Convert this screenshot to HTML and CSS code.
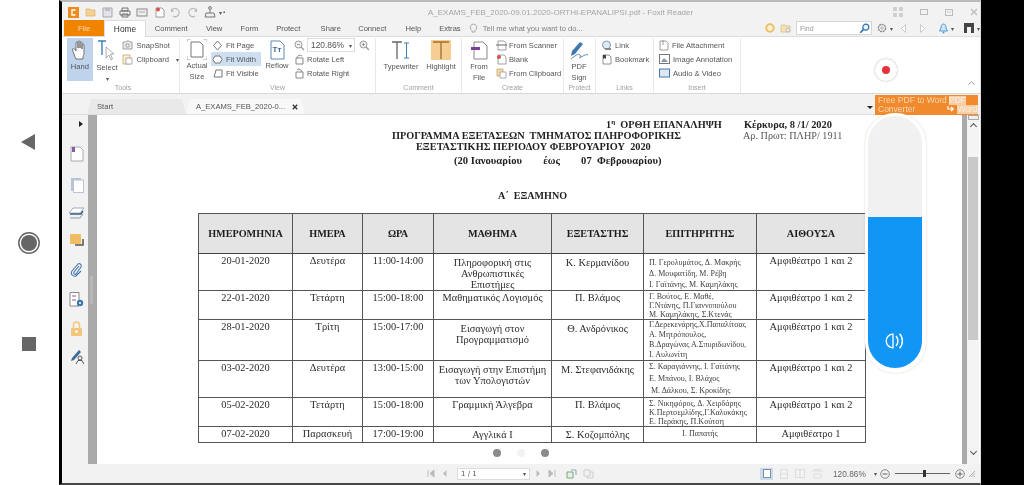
FILE: index.html
```html
<!DOCTYPE html>
<html lang="el">
<head>
<meta charset="utf-8">
<title>Foxit Reader</title>
<link rel="stylesheet" href="styles.css">
</head>
<body>
<nav class="nav">
  <svg class="nav-back" width="16" height="18" viewBox="0 0 16 18"><path d="M15 1V17L1 9Z" fill="#666"/></svg>
  <svg class="nav-home" width="24" height="24" viewBox="0 0 24 24"><circle cx="12" cy="12" r="10.2" fill="none" stroke="#666" stroke-width="1.5"/><circle cx="12" cy="12" r="8" fill="#666"/></svg>
  <span class="nav-recent"></span>
</nav>
<div class="window">
  <div class="titlebar">
    <div class="qat">
      <svg width="11" height="11" viewBox="0 0 11 11"><rect width="11" height="11" fill="#f08a1c"/><path d="M7.5 3H4V8H7.5" fill="none" stroke="#fff" stroke-width="1.4"/></svg>
      <svg width="12" height="11" viewBox="0 0 12 11"><path d="M1 2H5L6 3H10V9H1Z" fill="#f3d38f" stroke="#d9b36a" stroke-width=".7"/></svg>
      <svg width="11" height="11" viewBox="0 0 11 11"><path d="M1 1H10V10H1Z" fill="#e4e4e8" stroke="#a5a5ad"/><path d="M3 1H8V4H3Z" fill="#bdbdc5"/></svg>
      <svg width="12" height="11" viewBox="0 0 12 11"><path d="M3 1H9V4H3ZM1 4H11V8H1ZM3 7H9V10H3Z" fill="#eee" stroke="#666" stroke-width=".9"/></svg>
      <svg width="12" height="11" viewBox="0 0 12 11"><rect x="1" y="2" width="10" height="7" fill="#eee" stroke="#888"/><path d="M3 5H9" stroke="#aaa"/></svg>
      <svg width="11" height="11" viewBox="0 0 11 11"><path d="M2 1H8L10 3V10H2Z" fill="#fff" stroke="#888" stroke-width=".8"/><circle cx="4" cy="2.5" r="2" fill="#d9534f"/></svg>
      <svg width="11" height="11" viewBox="0 0 11 11"><path d="M2 3A4 4 0 1 1 3 9" fill="none" stroke="#bbb" stroke-width="1.2"/><path d="M1 1V5H4Z" fill="#bbb"/></svg>
      <svg width="11" height="11" viewBox="0 0 11 11"><path d="M9 3A4 4 0 1 0 8 9" fill="none" stroke="#bbb" stroke-width="1.2"/><path d="M10 1V5H7Z" fill="#bbb"/></svg>
      <svg width="14" height="12" viewBox="0 0 14 12"><path d="M3 7H11L12 11H2ZM7 7V2" fill="#eee" stroke="#777"/><circle cx="7" cy="2" r="1.4" fill="#eee" stroke="#777"/></svg>
      <span class="qat-more">▾</span>
      <span class="qat-more">▪</span>
    </div>
    <div class="doc-title">A_EXAMS_FEB_2020-09.01.2020-ORTHI-EPANALIPSI.pdf - Foxit Reader</div>
    <div class="win-controls">
      <svg width="10" height="10" viewBox="0 0 10 10"><path d="M0 0H4V4H0ZM6 0H10V4H6ZM0 6H4V10H0ZM6 6H10V10H6Z" fill="#cfcfcf"/></svg>
      <svg width="8" height="6" viewBox="0 0 8 6"><rect x=".5" y=".5" width="7" height="5" fill="none" stroke="#bbb"/></svg>
      <svg width="8" height="7" viewBox="0 0 8 7"><rect x=".5" y=".5" width="7" height="6" fill="none" stroke="#bbb"/><path d="M2 3H6" stroke="#ccc"/></svg>
      <svg width="8" height="8" viewBox="0 0 8 8"><path d="M1 1L7 7M7 1L1 7" stroke="#bbb" stroke-width="1.2"/></svg>
    </div>
  </div>

  <div class="menu">
    <span class="tab-file">File</span>
    <span class="tab-home">Home</span>
    <span class="tab tab-w44">Comment</span>
    <span class="tab tab-w35">View</span>
    <span class="tab tab-w36">Form</span>
    <span class="tab tab-w45">Protect</span>
    <span class="tab tab-w38">Share</span>
    <span class="tab tab-w48">Connect</span>
    <span class="tab tab-w34">Help</span>
    <span class="tab tab-w42">Extras</span>
    <span class="tell">
      <svg width="9" height="11" viewBox="0 0 9 11"><path d="M4.5 1A3.5 3.5 0 0 1 6 7.5V9H3V7.5A3.5 3.5 0 0 1 4.5 1Z" fill="none" stroke="#aaa"/></svg>
      Tell me what you want to do...
    </span>
    <span class="menu-right">
      <svg class="ring" width="10" height="10" viewBox="0 0 10 10"><circle cx="5" cy="5" r="3.8" fill="#fff3d0" stroke="#edbd5f" stroke-width="1.8"/></svg>
      <svg width="12" height="11" viewBox="0 0 12 11"><path d="M1 2H5L6 3H10V9H1Z" fill="#f6e1b4" stroke="#d8c18e" stroke-width=".8"/><circle cx="8" cy="7" r="2" fill="#eee" stroke="#aaa" stroke-width=".7"/></svg>
      <span class="find">Find<svg width="11" height="11" viewBox="0 0 11 11"><circle cx="6.8" cy="4.2" r="3" fill="#eaf4ff" stroke="#2d6fb5" stroke-width="1.2"/><path d="M4.6 6.4L1.3 9.8" stroke="#2d6fb5" stroke-width="1.6"/></svg></span>
      <svg width="10" height="10" viewBox="0 0 10 10"><circle cx="5" cy="5" r="3.6" fill="none" stroke="#888" stroke-width="1.4" stroke-dasharray="2 .7"/><circle cx="5" cy="5" r="1.2" fill="none" stroke="#999" stroke-width=".7"/></svg>
      <span class="mini-arrow">▾</span>
      <svg class="gap-l" width="5" height="9" viewBox="0 0 5 9"><path d="M4.5 .5V8.5L.5 4.5Z" fill="#fff" stroke="#ccc"/></svg>
      <svg class="gap-l2" width="5" height="9" viewBox="0 0 5 9"><path d="M.5 .5V8.5L4.5 4.5Z" fill="#fff" stroke="#ccc"/></svg>
      <svg class="gap-l2" width="9" height="11" viewBox="0 0 9 11"><path d="M4.5 1C6.5 1 7 3 7 5L8.500 8H.5L2 5C2 3 2.500 1 4.500 1Z" fill="#cfe6f8" stroke="#4a9ad4"/><circle cx="4.500" cy="9.500" r="1" fill="#4a9ad4"/></svg>
      <span class="mini-arrow">▾</span>
      <svg class="gap-l3" width="10" height="10" viewBox="0 0 10 10"><path d="M0 0H10V10H7V4H3V10H0Z" fill="#444"/></svg>
      <span class="mini-arrow">▾</span>
    </span>
  </div>

  <div class="ribbon">
    <section class="group g-tools">
      <div class="group-body">
        <div class="big big-hand">
          <svg width="18" height="20" viewBox="0 0 18 20"><path d="M4 17L1.500 10C1 8.500 3 8 3.500 9L5 11V3C5 1.500 7 1.500 7 3V8V2C7 .5 9 .5 9 2V8V3C9 1.500 11 1.500 11 3V9V5C11 3.500 13 3.500 13 5V13C13 15 12 16 12 17V19H5Z" fill="#fff" stroke="#666" stroke-width=".9"/></svg>
          <span>Hand</span>
        </div>
        <div class="big big-select">
          <svg width="20" height="22" viewBox="0 0 20 22"><path d="M1 1H9M5 1V15" stroke="#3f7fb8" stroke-width="1.400" fill="none"/><path d="M9 7V18L12 15L14 20L15.500 19L13.500 14H17Z" fill="#fff" stroke="#999" stroke-width=".8"/></svg>
          <span>Select</span>
          <i class="drop">▾</i>
        </div>
        <div class="col col-snap">
          <div class="row"><svg width="11" height="10" viewBox="0 0 11 10"><path d="M1 2H3.500L4.500 1H7L8 2H10V9H1Z" fill="#eee" stroke="#888" stroke-width=".8"/><circle cx="5.500" cy="5.500" r="1.800" fill="none" stroke="#888" stroke-width=".8"/></svg>SnapShot</div>
          <div class="row"><svg width="11" height="12" viewBox="0 0 11 12"><path d="M1 2H8V11H1Z" fill="#fbeed5" stroke="#c8a86a" stroke-width=".8"/><path d="M4 5H10V11H4Z" fill="#fff" stroke="#999" stroke-width=".8"/></svg>Clipboard<i class="drop-inline">▾</i></div>
        </div>
      </div>
      <div class="group-label">Tools</div>
    </section>

    <section class="group g-view">
      <div class="group-body">
        <div class="big big-actual">
          <svg width="20" height="21" viewBox="0 0 20 21"><path d="M4 3H13L16 6V18H4Z" fill="#fff" stroke="#777"/><path d="M0 3V0H4M16 0H20V3M0 17V21H4M16 21H20V17" fill="none" stroke="#999" stroke-width=".8"/></svg>
          <span>Actual<br>Size</span>
        </div>
        <div class="col col-fit">
          <div class="row"><svg width="11" height="11" viewBox="0 0 11 11"><path d="M5.500 1L9.500 5.500L5.500 10L1.500 5.500Z" fill="#fff" stroke="#777"/></svg>Fit Page</div>
          <div class="row row-on"><svg width="11" height="11" viewBox="0 0 11 11"><path d="M3 2H8L10 5.500L8 9H3L1 5.500Z" fill="#fff" stroke="#777"/></svg>Fit Width</div>
          <div class="row"><svg width="11" height="11" viewBox="0 0 11 11"><path d="M4 2H10V9H2Z" fill="#fff" stroke="#777"/></svg>Fit Visible</div>
        </div>
        <div class="big big-reflow">
          <svg width="15" height="20" viewBox="0 0 15 20"><path d="M1 1H10L14 5V19H1Z" fill="#fff" stroke="#5b87b5"/></svg>
          <span class="tt">Tт</span>
          <span>Reflow</span>
        </div>
        <div class="col col-zoom">
          <div class="row row-zoom">
            <svg width="11" height="11" viewBox="0 0 11 11"><circle cx="4.500" cy="4.500" r="3.500" fill="#f2f2f2" stroke="#999"/><path d="M7 7L10 10" stroke="#999" stroke-width="1.300"/><path d="M3 4.500H6" stroke="#999"/></svg>
            <span class="zoombox">120.86%<i>▾</i></span>
            <svg class="zoom-plus" width="11" height="11" viewBox="0 0 11 11"><circle cx="4.500" cy="4.500" r="3.500" fill="#f2f2f2" stroke="#999"/><path d="M7 7L10 10" stroke="#999" stroke-width="1.300"/><path d="M3 4.500H6M4.500 3V6" stroke="#999"/></svg>
          </div>
          <div class="row"><svg width="11" height="11" viewBox="0 0 11 11"><path d="M2 4H9V10H2ZM3 4A3 3 0 0 1 8 2" fill="none" stroke="#888"/></svg>Rotate Left</div>
          <div class="row"><svg width="11" height="11" viewBox="0 0 11 11"><path d="M2 4H9V10H2ZM8 4A3 3 0 0 0 3 2" fill="none" stroke="#888"/></svg>Rotate Right</div>
        </div>
      </div>
      <div class="group-label">View</div>
    </section>

    <section class="group g-comment">
      <div class="group-body">
        <div class="big big-type">
          <svg width="20" height="20" viewBox="0 0 20 20"><path d="M1 1H11M6 1V18" stroke="#666" stroke-width="1.300" fill="none"/><path d="M13 2H18M15.500 2V17M13 17H18" stroke="#3f7fb8" fill="none"/></svg>
          <span>Typewriter</span>
        </div>
        <div class="big big-high">
          <span class="high-box"><svg width="20" height="20" viewBox="0 0 20 20"><path d="M2 2H18M10 2V19" stroke="#a46f2d" stroke-width="1.300" fill="none"/></svg></span>
          <span>Highlight</span>
        </div>
      </div>
      <div class="group-label">Comment</div>
    </section>

    <section class="group g-create">
      <div class="group-body">
        <div class="big big-file">
          <svg width="17" height="19" viewBox="0 0 17 19"><path d="M3 1H12L16 5V18H3Z" fill="#fff" stroke="#888"/><path d="M0 6H9V9H0Z" fill="#7b3f98"/></svg>
          <span>From<br>File</span>
        </div>
        <div class="col col-create">
          <div class="row"><svg width="11" height="11" viewBox="0 0 11 11"><path d="M2 1H8L10 3V10H2Z" fill="#fff" stroke="#888" stroke-width=".8"/><path d="M0 5H11" stroke="#666"/></svg>From Scanner</div>
          <div class="row"><svg width="11" height="11" viewBox="0 0 11 11"><path d="M2 1H8L10 3V10H2Z" fill="#fff" stroke="#888" stroke-width=".8"/><circle cx="3" cy="3" r="2" fill="#d9534f"/></svg>Blank</div>
          <div class="row"><svg width="11" height="11" viewBox="0 0 11 11"><path d="M1 1H7V8H1Z" fill="#f5d9a8" stroke="#c8a86a" stroke-width=".8"/><path d="M4 4H10V10H4Z" fill="#fff" stroke="#999" stroke-width=".8"/></svg>From Clipboard</div>
        </div>
      </div>
      <div class="group-label">Create</div>
    </section>

    <section class="group g-protect">
      <div class="group-body">
        <div class="big big-sign">
          <svg width="20" height="20" viewBox="0 0 20 20"><path d="M11 1L14 3L6 13L2 15L3 10Z" fill="#4278ae"/><path d="M2 18C6 15 9 12 11 14S8 18 12 16S17 13 19 14" fill="none" stroke="#5b87b5"/></svg>
          <span>PDF<br>Sign</span>
        </div>
      </div>
      <div class="group-label">Protect</div>
    </section>

    <section class="group g-links">
      <div class="group-body">
        <div class="col col-links">
          <div class="row"><svg width="11" height="11" viewBox="0 0 11 11"><circle cx="5.500" cy="5" r="4" fill="#dfe9f2" stroke="#7f99b3"/><path d="M4 8H10V10H4Z" fill="#888"/></svg>Link</div>
          <div class="row"><svg width="11" height="11" viewBox="0 0 11 11"><path d="M2 1H8L10 3V10H2Z" fill="#fff" stroke="#777" stroke-width=".8"/><path d="M2 1H5V5L3.500 4L2 5Z" fill="#444"/></svg>Bookmark</div>
        </div>
      </div>
      <div class="group-label">Links</div>
    </section>

    <section class="group g-insert">
      <div class="group-body">
        <div class="col col-insert">
          <div class="row"><svg width="10" height="12" viewBox="0 0 10 12"><path d="M1 2H7L9 4V11H1Z" fill="#fff" stroke="#888" stroke-width=".8"/><path d="M4 1V6" stroke="#999"/></svg>File Attachment</div>
          <div class="row"><svg width="11" height="10" viewBox="0 0 11 10"><rect x=".5" y=".5" width="10" height="9" fill="#fff" stroke="#777"/><path d="M2 8L5 4L9 8Z" fill="#7f99b3"/></svg>Image Annotation</div>
          <div class="row"><svg width="11" height="10" viewBox="0 0 11 10"><rect x=".5" y="1" width="10" height="8" fill="#dce9f5" stroke="#4278ae"/></svg>Audio &amp; Video</div>
        </div>
      </div>
      <div class="group-label">Insert</div>
    </section>
    <svg class="collapse" width="7" height="4" viewBox="0 0 7 4"><path d="M.5 3.500L3.500 .8L6.500 3.500" fill="none" stroke="#999"/></svg>
  </div>

  <div class="band"></div>

  <div class="doctabs">
    <span class="doctab doctab-start">Start</span>
    <span class="doctab doctab-active">A_EXAMS_FEB_2020-0...<svg width="6" height="6" viewBox="0 0 6 6"><path d="M.8.8L5.200 5.200M5.200.8L.8 5.200" stroke="#333" stroke-width="1.300"/></svg></span>
    <i class="tabs-drop"></i>
  </div>

  <div class="main">
    <aside class="panel">
      <span class="panel-toggle"></span>
      <svg width="14" height="16" viewBox="0 0 14 16"><path d="M1 1H10L13 4V15H1Z" fill="#fff" stroke="#aaa"/><path d="M2 1H5V6H2Z" fill="#8a5ba8"/></svg>
      <svg width="14" height="16" viewBox="0 0 14 16"><rect x="1" y="1" width="10" height="13" fill="#b9c4d6"/><rect x="3.500" y="3" width="10" height="12.500" fill="#fff" stroke="#b9c4d6"/></svg>
      <svg width="15" height="13" viewBox="0 0 15 13"><path d="M4 1H15L11 6H0Z" fill="#fff" stroke="#8a9ab0" stroke-width=".8"/><path d="M1 7H12L14 4" fill="none" stroke="#3e5f86" stroke-width="1.400"/><path d="M1 11H11L14 7" fill="none" stroke="#8a9ab0"/></svg>
      <svg width="14" height="14" viewBox="0 0 14 14"><rect x="0" y="0" width="11" height="10" rx="1" fill="#f2bc62"/><path d="M5 11H13V5" fill="none" stroke="#555" stroke-width="1.500"/></svg>
      <svg width="13" height="15" viewBox="0 0 13 15"><path d="M9 4L4 10C3 12 5 13 6 12L11 5C12 2 9 1 8 2L2 9C0 12 3 15 6 14L11 9" fill="none" stroke="#4278ae" stroke-width="1.100"/></svg>
      <svg width="15" height="15" viewBox="0 0 15 15"><path d="M1 .5H10V14H1Z" fill="#fff" stroke="#888"/><path d="M3 4H7M3 8H7" stroke="#8a5ba8"/><circle cx="11" cy="11" r="3.200" fill="#3a78b4"/><circle cx="11" cy="11" r="1" fill="#fff"/></svg>
      <svg width="13" height="15" viewBox="0 0 13 15"><path d="M3.500 7V4A3 3 0 0 1 9.500 4V7" fill="none" stroke="#f2c67c" stroke-width="1.500"/><rect x="1" y="7" width="11" height="8" rx="1" fill="#f2c67c"/><circle cx="6.500" cy="10.500" r="1.300" fill="#fff"/></svg>
      <svg width="14" height="14" viewBox="0 0 14 14"><path d="M9 0L11 2L4 10L1 11L2 8Z" fill="#3e6a9a"/><circle cx="10" cy="8" r="2" fill="none" stroke="#555"/><path d="M6 14L8 10.500H12L14 14" fill="none" stroke="#555"/></svg>
    </aside>
    <div class="splitter"><span></span></div>

    <article class="page">
      <div class="head-1"><span class="h1-mid">1<sup>η</sup>  ΟΡΘΗ ΕΠΑΝΑΛΗΨΗ</span><span class="h1-place">Κέρκυρα, 8 /1/ 2020</span></div>
      <div class="head-2"><span class="h2-mid">ΠΡΟΓΡΑΜΜΑ ΕΞΕΤΑΣΕΩΝ  ΤΜΗΜΑΤΟΣ ΠΛΗΡΟΦΟΡΙΚΗΣ</span><span class="h2-ref">Αρ. Πρωτ: ΠΛΗΡ/ 1911</span></div>
      <div class="head-3">ΕΞΕΤΑΣΤΙΚΗΣ ΠΕΡΙΟΔΟΥ ΦΕΒΡΟΥΑΡΙΟΥ  2020</div>
      <div class="head-4">(20 Ιανουαρίου        έως        07  Φεβρουαρίου)</div>
      <div class="semester">Α΄  ΕΞΑΜΗΝΟ</div>

      <table class="exams">
        <colgroup>
          <col class="c1"><col class="c2"><col class="c3"><col class="c4"><col class="c5"><col class="c6"><col class="c7">
        </colgroup>
        <thead>
          <tr>
            <th>ΗΜΕΡΟΜΗΝΙΑ</th><th>ΗΜΕΡΑ</th><th>ΩΡΑ</th><th>ΜΑΘΗΜΑ</th><th>ΕΞΕΤΑΣΤΗΣ</th><th>ΕΠΙΤΗΡΗΤΗΣ</th><th>ΑΙΘΟΥΣΑ</th>
          </tr>
        </thead>
        <tbody>
          <tr class="r1">
            <td>20-01-2020</td><td>Δευτέρα</td><td>11:00-14:00</td>
            <td class="pad3">Πληροφορική στις<br>Ανθρωπιστικές<br>Επιστήμες</td>
            <td class="pad3">Κ. Κερμανίδου</td>
            <td class="sup sup-loose">Π. Γερολυμάτος, Δ. Μακρής<br>Δ. Μουφατίδη, Μ. Ρέβη<br>Ι. Γαϊτάνης, Μ. Καμηλάκης</td>
            <td>Αμφιθέατρο 1 και 2</td>
          </tr>
          <tr class="r2">
            <td>22-01-2020</td><td>Τετάρτη</td><td>15:00-18:00</td>
            <td>Μαθηματικός Λογισμός</td>
            <td>Π. Βλάμος</td>
            <td class="sup sup-tight">Γ. Βούτος, Ε. Μαθέ,<br>Γ.Ντάνης, Π.Γιαννοπούλου<br>Μ. Καμηλάκης, Σ.Κτενάς</td>
            <td>Αμφιθέατρο 1 και 2</td>
          </tr>
          <tr class="r3">
            <td>28-01-2020</td><td>Τρίτη</td><td>15:00-17:00</td>
            <td class="pad3">Εισαγωγή στον<br>Προγραμματισμό</td>
            <td class="pad3">Θ. Ανδρόνικος</td>
            <td class="sup sup-r3">Γ.Δερεκενάρης,Χ.Παπαλίτσας<br>Α. Μητρόπουλος,<br>Β.Δραγώνας Α.Σπυριδωνίδου,<br>Ι. Αυλωνίτη</td>
            <td>Αμφιθέατρο 1 και 2</td>
          </tr>
          <tr class="r4">
            <td>03-02-2020</td><td>Δευτέρα</td><td>13:00-15:00</td>
            <td class="pad3">Εισαγωγή στην Επιστήμη<br>των Υπολογιστών</td>
            <td class="pad3">Μ. Στεφανιδάκης</td>
            <td class="sup sup-r4">Σ. Καραγιάννης, Ι. Γαϊτάνης<br>Ε. Μπάνου, Ι. Βλάχος<br> Μ. Δάλκου, Σ. Κροκίδης</td>
            <td>Αμφιθέατρο 1 και 2</td>
          </tr>
          <tr class="r5">
            <td>05-02-2020</td><td>Τετάρτη</td><td>15:00-18:00</td>
            <td>Γραμμική Άλγεβρα</td>
            <td>Π. Βλάμος</td>
            <td class="sup sup-tight">Σ. Νικηφόρος, Δ. Χειρδάρης<br>Κ.Περτσεμλίδης,Γ.Καλυκάκης<br>Ε. Περάκης, Π.Κούτση</td>
            <td>Αμφιθέατρο 1 και 2</td>
          </tr>
          <tr class="r6">
            <td>07-02-2020</td><td>Παρασκευή</td><td>17:00-19:00</td>
            <td class="pad2">Αγγλικά Ι</td>
            <td class="pad2">Σ. Κοζομπόλης</td>
            <td class="sup sup-center">Ι. Παπατής</td>
            <td>Αμφιθέατρο 1</td>
          </tr>
        </tbody>
      </table>
    </article>

    <div class="gutter"></div>
    <div class="scrollbar">
      <span class="sb-handle"></span>
      <span class="sb-up"></span>
      <span class="sb-thumb"></span>
      <span class="sb-down"></span>
    </div>
  </div>

  <footer class="status">
    <div class="pager">
      <svg width="9" height="9" viewBox="0 0 9 9"><path d="M1 1V8M7 1V8L3 4.500Z" fill="#bbb" stroke="#bbb"/></svg>
      <svg width="5" height="9" viewBox="0 0 5 9"><path d="M4.500 1V8L1 4.500Z" fill="#bbb"/></svg>
      <span class="pagebox">1 / 1<i>▾</i></span>
      <svg width="5" height="9" viewBox="0 0 5 9"><path d="M.5 1V8L4 4.500Z" fill="#bbb"/></svg>
      <svg width="9" height="9" viewBox="0 0 9 9"><path d="M8 1V8M2 1V8L6 4.500Z" fill="#bbb" stroke="#bbb"/></svg>
      <svg class="pg-gap" width="11" height="10" viewBox="0 0 11 10"><path d="M1 3H7V9H1Z" fill="#e7f2e7" stroke="#7aa67a"/><path d="M5 1H10V6" fill="none" stroke="#8aa4c0"/></svg>
      <svg width="11" height="10" viewBox="0 0 11 10"><path d="M1 1H7V7H1ZM4 7V9H10V3H7" fill="none" stroke="#ccc"/></svg>
    </div>
    <div class="views">
      <span class="view-on"><svg width="8" height="9" viewBox="0 0 8 9"><rect x=".5" y=".5" width="7" height="8" fill="#fff" stroke="#7f8fa5"/></svg></span>
      <svg width="8" height="10" viewBox="0 0 8 10"><path d="M.5.500H7.500V9.500H.5ZM.5 5H7.500" fill="none" stroke="#ddd"/></svg>
      <svg width="10" height="9" viewBox="0 0 10 9"><path d="M.5.500H9.500V8.500H.5ZM5 .5V8.500" fill="none" stroke="#ddd"/></svg>
      <svg width="11" height="10" viewBox="0 0 11 10"><path d="M0 2H11M2 .5H9M2 5H9V9H2Z" fill="none" stroke="#ddd"/></svg>
    </div>
    <div class="zoomtext">120.86%</div>
    <div class="zoomctl">
      <i class="mini-arrow">▾</i>
      <svg width="10" height="10" viewBox="0 0 10 10"><circle cx="5" cy="5" r="4.300" fill="none" stroke="#888"/><path d="M2.500 5H7.500" stroke="#666"/></svg>
      <span class="slider"><span class="knob"></span></span>
      <svg width="10" height="10" viewBox="0 0 10 10"><circle cx="5" cy="5" r="4.300" fill="none" stroke="#888"/><path d="M2.500 5H7.500M5 2.500V7.500" stroke="#666"/></svg>
      <svg width="8" height="8" viewBox="0 0 8 8"><path d="M7 1L1 7M7 3.500L3.500 7M7 6L6 7" stroke="#aaa"/></svg>
    </div>
  </footer>

  <aside class="promo">
    <span class="promo-text">Free PDF to Word<br>Converter</span>
    <b class="badge badge-pdf">PDF</b>
    <svg class="badge-arrow" width="7" height="6" viewBox="0 0 7 6"><path d="M1 0V3H6M4 1L6.500 3L4 5" fill="none" stroke="#fff" stroke-width="1.200"/></svg>
    <b class="badge badge-word">Word</b>
  </aside>
</div>
<div class="edge"></div>

<div class="rec"><span></span></div>
<div class="volume">
  <div class="vol-track">
    <div class="vol-fill">
      <svg width="20" height="18" viewBox="0 0 20 18"><path d="M8 2.200V15.800C4 15.800 1.200 12.800 1.200 9S4 2.200 8 2.200Z" fill="none" stroke="#fff" stroke-width="1.300"/><path d="M11 4C13.500 6.500 13.500 11.500 11 14M14.500 1.800C18.300 5.500 18.300 12.500 14.500 16.200" fill="none" stroke="#fff" stroke-width="1.500"/></svg>
    </div>
  </div>
</div>
<div class="dots"><span></span><span class="faint"></span><span></span></div>
</body>
</html>
```

FILE: styles.css
```css
* { box-sizing: border-box; }
html, body { margin: 0; padding: 0; }
body {
  position: relative;
  width: 1024px;
  height: 485px;
  overflow: hidden;
  display: flex;
  background: #fff;
  font-family: "Liberation Sans", sans-serif;
  font-size: 7.6px;
  color: #555;
}
svg { display: block; flex: none; }
i { font-style: normal; }

/* phone nav */
.nav {
  width: 59px;
  flex: none;
  display: flex;
  flex-direction: column;
  align-items: center;
  padding: 133px 0 0 0;
}
.nav-back { margin-left: -4px; }
.nav-home { margin-top: 80px; margin-left: -1px; }
.nav-recent { display: block; width: 14px; height: 14px; background: #666; margin-top: 82px; margin-left: -2px; }

.edge { flex: 1; background: #000; }

/* window */
.window {
  position: relative;
  width: 922px;
  flex: none;
  border-left: 3px solid #000;
  border-right: 1px solid #ddd;
  display: flex;
  flex-direction: column;
  background: #f2f2f3;
  border-top: 2px solid #bbb;
  border-bottom: 2px solid #444;
  filter: blur(.3px);
}
.titlebar {
  height: 18px;
  display: flex;
  align-items: center;
  padding: 2px 0 0 6px;
  position: relative;
}
.qat { display: flex; align-items: center; gap: 5.500px; width: 360px; }
.qat-more { font-size: 6px; margin-left: -4px; color: #555; }
.doc-title { width: 411px; color: #a5a5a5; font-size: 8px; white-space: nowrap; }
.win-controls { display: flex; align-items: center; gap: 17px; margin-left: 54px; }

.menu {
  height: 16px;
  display: flex;
  align-items: center;
  position: relative;
  padding-left: 2px;
}
.tab-file {
  width: 41px; height: 16px; background: #f08300; color: #f8dcb8;
  display: flex; align-items: center; justify-content: center;
}
.tab-home {
  width: 42px; height: 17px; margin-top: 1px; background: #fff; color: #333; font-size: 8.400px;
  border: 1px solid #ddd; border-bottom: 0;
  display: flex; align-items: center; justify-content: center;
  position: relative; z-index: 1;
}
.tab { padding-left: 9px; white-space: nowrap; }
.tab-w44 { width: 52px; } .tab-w35 { width: 35px; } .tab-w36 { width: 36px; }
.tab-w45 { width: 45px; } .tab-w38 { width: 38px; } .tab-w48 { width: 48px; }
.tab-w34 { width: 34px; } .tab-w42 { width: 33px; }
.tell { display: flex; align-items: center; gap: 5px; color: #808080; margin-left: 6px; width: 301px; white-space: nowrap; }
.menu-right { display: flex; align-items: center; gap: 3px; color: #666; }
.ring { margin-right: 2px; }
.find {
  width: 76px; height: 14px; background: #fff; border: 1px solid #d6d6d6;
  display: flex; align-items: center; justify-content: space-between;
  padding: 0 1px 0 3px; margin: 0 2px 0 1px; color: #999; font-size: 7px;
}
.mini-arrow { font-size: 6px; color: #555; }
.gap-l { margin-left: 5px; }
.gap-l2 { margin-left: 11px; }
.gap-l3 { margin-left: 7px; }

/* ribbon */
.ribbon {
  height: 58px;
  background: #fff;
  display: flex;
  position: relative;
  border-top: 1px solid #ddd;
  border-bottom: 1px solid #d8d8d8;
  padding-left: 2px;
}
.group {
  display: flex;
  flex-direction: column;
  border-right: 1px solid #e8e8e8;
  margin: 1px 0 0;
}
.group-body { flex: 1; display: flex; min-height: 0; }
.group-label { height: 11px; line-height: 11px; text-align: center; font-size: 7px; color: #a0a0a0; }
.g-tools { width: 116px; padding-left: 3px; }
.g-view { width: 196px; }
.g-comment { width: 86px; }
.g-create { width: 102px; }
.g-protect { width: 32px; }
.g-links { width: 58px; }
.g-insert { width: 87px; }

.big {
  display: flex; flex-direction: column; align-items: center;
  position: relative; text-align: center; line-height: 10.500px; white-space: nowrap;
}
.big > span { display: block; }
.big-hand { width: 27px; height: 43px; background: #bfd3ec; padding-top: 2px; margin-right: 3px; gap: 2px; color: #555; }
.big-select { width: 24px; padding-top: 2px; gap: 1px; }
.drop { font-size: 6px; line-height: 8px; color: #555; }
.drop-inline { font-size: 6px; margin-left: 4px; color: #555; }
.col { display: flex; flex-direction: column; }
.row { height: 14px; display: flex; align-items: center; gap: 3px; white-space: nowrap; }
.row-on { background: #cfdff2; color: #555; width: 50px; margin-left: -1px; padding-left: 1px; }
.col-snap { margin-left: 4px; }
.big-actual { width: 22px; margin-left: 6px; padding-top: 1px; gap: 1px; }
.col-fit { margin-left: 4px; width: 51px; }
.big-reflow { width: 24px; padding-top: 2px; margin-left: 2px; gap: 1px; }
.big-reflow .tt { position: absolute; top: 6px; left: 0; width: 24px; font-size: 8px; line-height: 12px; color: #3e6a9a; font-weight: 700; }
.col-zoom { margin-left: 5px; }
.col-zoom .row { gap: 2px; }
.zoom-plus { margin-left: 2px; }
.zoombox {
  width: 48px; height: 14px; border: 1px solid #ddd; padding: 0 2px 0 3px;
  display: flex; align-items: center; justify-content: space-between; font-size: 8.400px;
}
.zoombox i { font-size: 6px; color: #555; }
.big-type { width: 42px; margin-left: 4px; padding-top: 3px; gap: 1px; }
.big-high { width: 36px; margin-left: 1px; padding-top: 2px; gap: 2px; }
.high-box { width: 20px; height: 20px; background: #f6cd92; }
.big-file { width: 22px; margin-left: 6px; padding-top: 3px; gap: 2px; }
.col-create { margin-left: 6px; }
.col-create .row { gap: 2px; }
.big-sign { width: 30px; padding-top: 3px; gap: 1px; }
.col-links { margin-left: 5px; }
.col-insert { margin-left: 5px; }
.collapse { position: absolute; right: 5px; bottom: 8px; }

.band { height: 6px; background: #f2f2f3; }

/* document tabs */
.doctabs {
  height: 15px;
  display: flex;
  align-items: flex-end;
  padding-left: 25px;
  border-bottom: 1px solid #ddd;
  position: relative;
}
.doctab {
  height: 15px;
  display: flex;
  align-items: center;
  padding-left: 10px;
  clip-path: polygon(4px 0, calc(100% - 4px) 0, 100% 100%, 0 100%);
  white-space: nowrap;
}
.doctab-start { width: 99px; background: #e9e9ea; }
.doctab-active { width: 119px; background: #f8f8f8; color: #555; gap: 7px; }
.tabs-drop {
  position: absolute; left: 805px; top: 6px; width: 0; height: 0;
  border-top: 3px solid #222; border-left: 3px solid transparent; border-right: 3px solid transparent;
}

/* main */
.main { height: 349px; display: flex; background: #fff; position: relative; }
.panel {
  width: 26px; flex: none; background: #f2f2f3;
  display: flex; flex-direction: column; align-items: center; padding: 6px 0 0 3px; gap: 14.300px;
}
.panel-toggle {
  display: block; width: 0; height: 0; margin: 0 0 5px 8px;
  border-left: 4px solid #222; border-top: 3.500px solid transparent; border-bottom: 3.500px solid transparent;
}
.splitter { width: 9px; flex: none; background: #aaa; display: flex; align-items: center; justify-content: center; padding-right: 2px; }
.splitter span { display: block; width: 3px; height: 28px; background: #b8b8b8; }

.page {
  width: 865px; flex: none; background: #fff;
  font-family: "Liberation Serif", serif;
  color: #333;
  font-size: 10px;
  padding-top: 4px;
  overflow: hidden;
}
.head-1 { display: flex; height: 11px; line-height: 12px; font-weight: 700; white-space: pre; }
.head-2 { display: flex; height: 11px; line-height: 12px; font-weight: 700; white-space: pre; }
.h1-mid { margin-left: 509px; width: 138px; color: #222; font-size: 10.300px; }
.h1-mid sup { font-size: 7px; line-height: 0; vertical-align: 4px; }
.h1-place { color: #222; font-size: 10.400px; }
.h2-mid { margin-left: 295px; width: 351px; font-size: 10.250px; color: #222; }
.h2-ref { font-weight: 400; color: #555; font-size: 10.200px; }
.head-3 { margin-left: 319px; height: 13px; line-height: 12px; font-weight: 700; color: #222; font-size: 10.300px; white-space: pre; }
.head-4 { margin-left: 357px; line-height: 13px; font-weight: 700; color: #222; font-size: 10.600px; white-space: pre; }
.semester { margin-left: 401px; margin-top: 22px; height: 14px; line-height: 14px; font-weight: 700; font-size: 10.100px; color: #222; white-space: pre; }

.exams {
  margin: 10px 0 0 101px;
  width: 667px;
  table-layout: fixed;
  border-collapse: collapse;
  font-size: 10.400px;
  line-height: 11px;
  color: #2c2c2c;
}
.c1 { width: 94px; } .c2 { width: 70px; } .c3 { width: 71px; } .c4 { width: 118px; }
.c5 { width: 92px; } .c6 { width: 113px; } .c7 { width: 109px; }
.exams th {
  height: 40px; background: #e4e4e4; font-size: 10.200px; color: #1c1c1c;
  border: 1px solid #555; border-bottom-color: #444; padding: 0; vertical-align: middle;
}
.exams td {
  border: 1px solid #555; padding: 1px 0 0; vertical-align: top; text-align: center; overflow: hidden;
}
.exams .r1 td { height: 37px; }
.exams .r2 td { height: 29px; }
.exams .r3 td { height: 41px; }
.exams .r4 td { height: 37px; }
.exams .r5 td { height: 29px; }
.exams .r6 td { height: 16px; }
.exams td.pad3 { padding-top: 3px; }
.exams td.pad2 { padding-top: 2px; }
.exams td.sup { font-size: 8px; text-align: left; padding-left: 5px; color: #3c3c3c; white-space: pre; }
.exams td.sup-loose { line-height: 11px; padding-top: 3px; }
.exams td.sup-tight { line-height: 9px; padding-top: 1px; }
.exams td.sup-r3 { line-height: 10px; padding-top: 0; }
.exams td.sup-r4 { line-height: 12px; padding-top: 0; }
.exams td.sup-center { text-align: center; padding-left: 0; padding-top: 1px; }

.gutter { width: 5px; flex: none; background: #aaa; }
.scrollbar { width: 12px; flex: none; background: #f4f4f4; position: relative; display: flex; flex-direction: column; align-items: center; }
.sb-handle { display: block; width: 11px; height: 5px; border: 1px solid #aaa; background: #eee; }
.sb-up {
  display: block; width: 5px; height: 5px; margin-top: 4px;
  border-left: 1px solid #555; border-top: 1px solid #555; transform: rotate(45deg);
}
.sb-thumb { display: block; width: 10px; height: 183px; margin-top: 28px; background: #c9c9c9; }
.sb-down {
  display: block; width: 5px; height: 5px; margin-top: 109px;
  border-right: 1px solid #555; border-bottom: 1px solid #555; transform: rotate(45deg);
}

/* status */
.status { flex: 1; display: flex; align-items: center; background: #f2f2f3; padding-left: 365px; }
.pager { display: flex; align-items: center; gap: 6px; width: 333px; }
.pg-gap { margin-left: 4px; }
.pagebox {
  width: 73px; height: 12px; background: #fff; border: 1px solid #ddd; margin-left: 4px;
  display: flex; align-items: center; justify-content: space-between; padding: 0 3px;
  font-family: "DejaVu Sans", sans-serif; font-size: 7px; color: #555;
}
.pagebox i { font-size: 6px; }
.views { display: flex; align-items: center; gap: 7px; width: 73px; }
.view-on { width: 13px; height: 12px; background: #c9d9ee; display: flex; align-items: center; justify-content: center; }
.zoomtext { width: 41px; color: #666; font-size: 8.300px; }
.zoomctl { display: flex; align-items: center; gap: 3px; }
.slider { width: 55px; height: 1px; background: #666; position: relative; display: block; margin: 0 2px; }
.knob { position: absolute; left: 28px; top: -3px; width: 3px; height: 7px; background: #333; }

/* promo */
.promo {
  position: absolute; left: 813px; top: 93px; width: 103px; height: 20px;
  background: #f18a2c; color: #f9d7b5; line-height: 9px; font-size: 8.500px;
  padding: 1px 0 0 3px; white-space: nowrap;
}
.promo-text { display: block; }
.badge {
  position: absolute; font-weight: 400; background: #f7cfa5; color: #fdf0e2;
  line-height: 9px; text-align: center;
}
.badge-pdf { left: 74px; top: 1px; width: 17px; }
.badge-word { left: 82px; top: 10px; width: 21px; }
.badge-arrow { position: absolute; left: 72px; top: 11px; }

/* overlays */
.rec {
  position: absolute; left: 875px; top: 59px; width: 22px; height: 22px; border-radius: 50%;
  background: #fff; box-shadow: 0 0 2px rgba(0,0,0,.35);
  display: flex; align-items: center; justify-content: center;
}
.rec span { display: block; width: 8px; height: 8px; border-radius: 50%; background: #e8303a; }
.volume {
  position: absolute; left: 865px; top: 113px; width: 61px; height: 260px;
  background: #fff; border-radius: 31px; padding: 3px 4px 5px 3px;
  box-shadow: 0 0 2px rgba(200,180,150,.6);
}
.vol-track {
  height: 100%; background: #f1f1f2; border-radius: 27px; overflow: hidden;
  display: flex; flex-direction: column; justify-content: flex-end;
}
.vol-fill {
  height: 151px; background: #1296f6;
  display: flex; justify-content: center; align-items: flex-end; padding-bottom: 18px;
}
.dots {
  position: absolute; left: 493px; top: 449px; display: flex; gap: 16px;
}
.dots span { display: block; width: 8px; height: 8px; border-radius: 50%; background: #8a8a8a; }
.dots .faint { background: #f2f2f2; }
```
